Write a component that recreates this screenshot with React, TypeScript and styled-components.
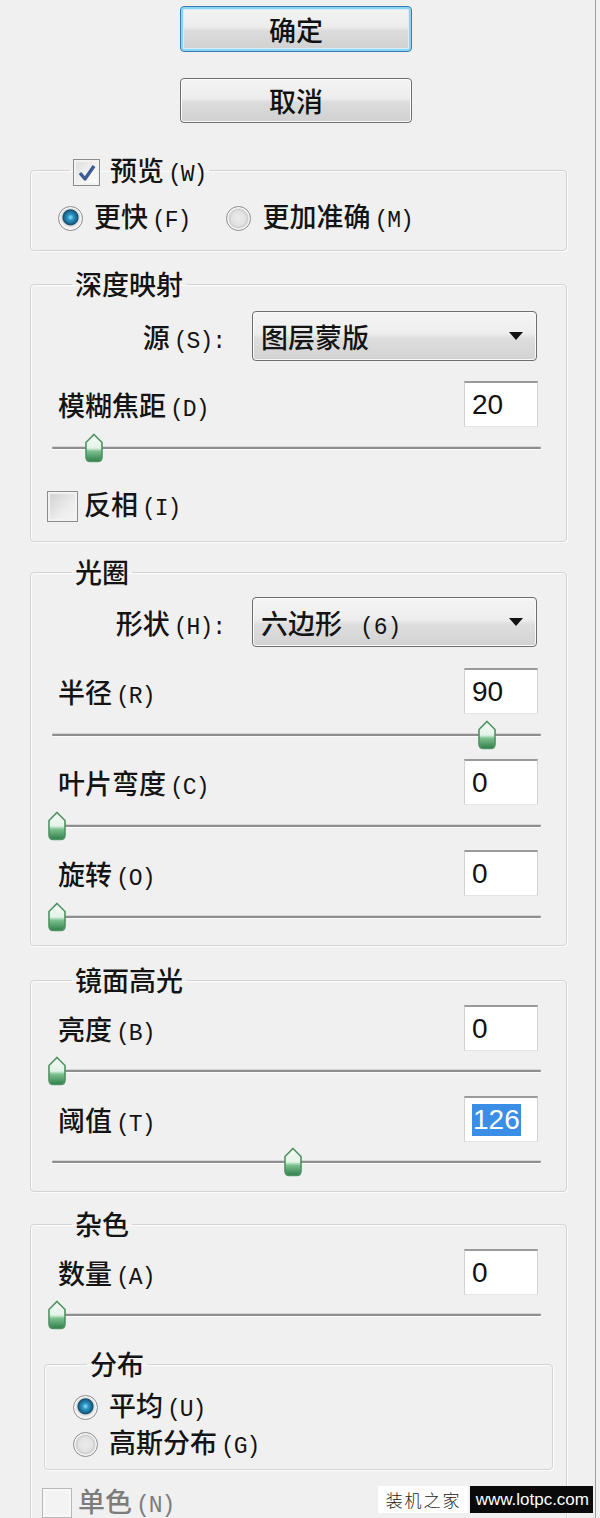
import React from 'react';
import styled, { createGlobalStyle } from 'styled-components';

const GlobalStyle = createGlobalStyle`
  html, body {
    margin: 0;
    padding: 0;
    background: #f0f0f0;
  }
  body {
    font-family: "Noto Sans CJK SC", "Noto Sans", sans-serif;
    color: #141414;
  }
`;

// slider geometry: thumb centre runs from 5px to 483px inside the row
const THUMB_START = 5;
const THUMB_RUN = 478;

const CheckMark = () => (
  <svg width="22" height="22" viewBox="0 0 22 22">
    <path d="M4 11 L9 17 L18 4" fill="none" stroke="#3d5a92" strokeWidth="3.4" strokeLinejoin="round" />
  </svg>
);

const ThumbIcon = () => (
  <svg width="20" height="30" viewBox="0 0 20 30">
    <defs>
      <linearGradient id="thumbFill" x1="0" y1="0" x2="0" y2="1">
        <stop offset="0" stopColor="#f7fcf8" />
        <stop offset="0.5" stopColor="#e3f3e7" />
        <stop offset="0.62" stopColor="#7cc08f" />
        <stop offset="1" stopColor="#2f7f49" />
      </linearGradient>
    </defs>
    <path
      d="M10 1.5 L18 9.5 L18 24 Q18 28.5 13.5 28.5 L6.5 28.5 Q2 28.5 2 24 L2 9.5 Z"
      fill="url(#thumbFill)"
      stroke="#4f9263"
      strokeWidth="1.6"
    />
  </svg>
);

const ComboArrow = () => (
  <svg width="16" height="10" viewBox="0 0 16 10">
    <path d="M1 1 L15 1 L8 9 Z" fill="#111" />
  </svg>
);

const Slider = ({ value, max, top }: { value: number; max: number; top: number }) => (
  <SliderRow $top={top}>
    <Track />
    <Thumb style={{ left: `${THUMB_START + (value / max) * THUMB_RUN - 10}px` }}>
      <ThumbIcon />
    </Thumb>
  </SliderRow>
);

interface FieldProps {
  label: string;
  mnemonic: string;
  value: string;
  top: number;
  selected?: boolean;
}

const Field = ({ label, mnemonic, value, top, selected }: FieldProps) => (
  <FieldRow $top={top}>
    <Label>
      {label}
      <Key>({mnemonic})</Key>
    </Label>
    <NumberBox>{selected ? <Selection>{value}</Selection> : value}</NumberBox>
  </FieldRow>
);

interface ComboProps {
  label: string;
  mnemonic: string;
  value: string;
  suffix?: string;
  top: number;
}

const Combo = ({ label, mnemonic, value, suffix, top }: ComboProps) => (
  <ComboRow $top={top}>
    <ComboLabel>
      {label}
      <Key>({mnemonic}):</Key>
    </ComboLabel>
    <ComboBox>
      <span>
        {value}
        {suffix && <ComboSuffix>{suffix}</ComboSuffix>}
      </span>
      <ComboArrow />
    </ComboBox>
  </ComboRow>
);

export default function App() {
  return (
    <>
      <GlobalStyle />
      <Window>
        <Dialog>
          <ButtonStack>
            <PushButton $primary>确定</PushButton>
            <PushButton>取消</PushButton>
          </ButtonStack>

          <Group $top={32}>
            <Legend $indent={12}>
              <LegendInner>
                <CheckBox $size={27}>
                  <CheckMark />
                </CheckBox>
                <span>
                  预览<Key>(W)</Key>
                </span>
              </LegendInner>
            </Legend>
            <OptionRow $top={18}>
              <Option>
                <RadioDot $on />
                <span>
                  更快<Key>(F)</Key>
                </span>
              </Option>
              <Option>
                <RadioDot />
                <span>
                  更加准确<Key>(M)</Key>
                </span>
              </Option>
            </OptionRow>
            <GroupEnd $size={17} />
          </Group>

          <Group $top={18}>
            <Legend $indent={14}>深度映射</Legend>
            <Combo label="源" mnemonic="S" value="图层蒙版" top={12} />
            <Field label="模糊焦距" mnemonic="D" value="20" top={20} />
            <Slider value={20} max={255} top={7} />
            <CheckRow $top={28} $shift={-11}>
              <CheckBox $size={31} $shade />
              <span>
                反相<Key>(I)</Key>
              </span>
            </CheckRow>
            <GroupEnd $size={19} />
          </Group>

          <Group $top={15}>
            <Legend $indent={14}>光圈</Legend>
            <Combo label="形状" mnemonic="H" value="六边形" suffix="(6)" top={10} />
            <Field label="半径" mnemonic="R" value="90" top={21} />
            <Slider value={90} max={100} top={7} />
            <Field label="叶片弯度" mnemonic="C" value="0" top={10} />
            <Slider value={0} max={100} top={7} />
            <Field label="旋转" mnemonic="O" value="0" top={10} />
            <Slider value={0} max={360} top={7} />
            <GroupEnd $size={14} />
          </Group>

          <Group $top={19}>
            <Legend $indent={14}>镜面高光</Legend>
            <Field label="亮度" mnemonic="B" value="0" top={10} />
            <Slider value={0} max={100} top={6} />
            <Field label="阈值" mnemonic="T" value="126" top={11} selected />
            <Slider value={126} max={255} top={6} />
            <GroupEnd $size={15} />
          </Group>

          <Group $top={17}>
            <Legend $indent={14}>杂色</Legend>
            <Field label="数量" mnemonic="A" value="0" top={10} />
            <Slider value={0} max={100} top={6} />
            <InnerGroup>
              <Legend $indent={14}>分布</Legend>
              <RadioLine $top={14}>
                <RadioDot $on />
                <span>
                  平均<Key>(U)</Key>
                </span>
              </RadioLine>
              <RadioLine $top={9}>
                <RadioDot />
                <span>
                  高斯分布<Key>(G)</Key>
                </span>
              </RadioLine>
              <GroupEnd $size={11} />
            </InnerGroup>
            <CheckRow $top={17} $shift={-16} $dim>
              <CheckBox $size={30} $dim />
              <span>
                单色<Key>(N)</Key>
              </span>
            </CheckRow>
            <GroupEnd $size={40} />
          </Group>
        </Dialog>

        <Watermark>
          <WatermarkName>装机之家</WatermarkName>
          <WatermarkUrl>www.lotpc.com</WatermarkUrl>
        </Watermark>
      </Window>
    </>
  );
}

const Window = styled.div`
  position: relative;
  width: 600px;
  height: 1518px;
  overflow: hidden;
  background: #f0f0f0;
`;

const Dialog = styled.div`
  width: 596px;
  height: 100%;
  box-sizing: border-box;
  padding-top: 6px;
  border-right: 1px solid #9c9c9c;
`;

const ButtonStack = styled.div`
  display: flex;
  flex-direction: column;
  align-items: center;
  gap: 26px;
  padding-right: 3px;
`;

const PushButton = styled.button<{ $primary?: boolean }>`
  width: 232px;
  height: ${(p) => (p.$primary ? 46 : 45)}px;
  box-sizing: border-box;
  padding: 0;
  border: 1px solid ${(p) => (p.$primary ? '#3a7fae' : '#6f6f6f')};
  border-radius: 4px;
  background: linear-gradient(#f4f4f4 0%, #ececec 46%, #dcdcdc 54%, #d0d0d0 100%);
  box-shadow: ${(p) =>
    p.$primary ? 'inset 0 0 0 2px #8bd3f3, inset 0 0 0 3px #d5effb' : 'inset 0 0 0 1px #fbfbfb'};
  font-family: "Noto Sans CJK SC", sans-serif;
  font-size: 27px;
  font-weight: 500;
  line-height: 1;
  color: #111;
`;

const Group = styled.fieldset<{ $top: number }>`
  margin: ${(p) => p.$top}px 28px 0 30px;
  padding: 0 28px 0 27px;
  border: 1px solid #d3d3d3;
  border-radius: 4px;
  box-shadow: inset 1px 1px 0 #fcfcfc, 1px 1px 0 #fcfcfc;
  min-width: 0;
`;

const InnerGroup = styled.fieldset`
  margin: 20px -15px 0 -14px;
  padding: 0 20px 0 28px;
  border: 1px solid #d3d3d3;
  border-radius: 4px;
  box-shadow: inset 1px 1px 0 #fcfcfc, 1px 1px 0 #fcfcfc;
  min-width: 0;
`;

const GroupEnd = styled.div<{ $size: number }>`
  height: ${(p) => p.$size}px;
`;

const Legend = styled.legend<{ $indent: number }>`
  margin-left: ${(p) => p.$indent}px;
  padding: 0 3px;
  height: 30px;
  font-size: 27px;
  font-weight: 500;
  line-height: 30px;
`;

const LegendInner = styled.span`
  display: inline-flex;
  align-items: center;
  gap: 10px;
`;

const Key = styled.span`
  margin-left: 4px;
  font-family: "Liberation Mono", "DejaVu Sans Mono", monospace;
  font-size: 23px;
  font-weight: 400;
  letter-spacing: -1px;
`;

const CheckBox = styled.span<{ $size: number; $shade?: boolean; $dim?: boolean }>`
  display: inline-flex;
  align-items: center;
  justify-content: center;
  flex: none;
  width: ${(p) => p.$size}px;
  height: ${(p) => p.$size}px;
  box-sizing: border-box;
  border: 1px solid ${(p) => (p.$dim ? '#b8b8b8' : '#8c8c8c')};
  background: ${(p) =>
    p.$dim
      ? '#f3f3f3'
      : p.$shade
      ? 'linear-gradient(135deg, #cfcfcf, #ececec 60%, #f6f6f6)'
      : 'linear-gradient(135deg, #dcdcdc, #f4f4f4 60%, #ffffff)'};
  box-shadow: inset 0 0 0 2px ${(p) => (p.$dim ? '#f7f7f7' : '#f2f2f2')};
`;

const OptionRow = styled.div<{ $top: number }>`
  display: flex;
  align-items: center;
  gap: 36px;
  height: 30px;
  margin-top: ${(p) => p.$top}px;
`;

const Option = styled.label`
  display: inline-flex;
  align-items: center;
  gap: 11px;
  font-size: 27px;
  font-weight: 500;
  line-height: 30px;
`;

const RadioLine = styled(Option)<{ $top: number }>`
  display: flex;
  height: 28px;
  margin-top: ${(p) => p.$top}px;
`;

const RadioDot = styled.span<{ $on?: boolean }>`
  width: 25px;
  height: 25px;
  flex: none;
  box-sizing: border-box;
  border-radius: 50%;
  border: 1px solid #8d8d8d;
  background: ${(p) =>
    p.$on
      ? 'radial-gradient(circle at 50% 45%, #8ce4f8 0, #2c95c4 3px, #1b6d95 6px, #164e6c 7.5px, #dadada 8.5px, #f6f6f6 11px)'
      : 'radial-gradient(circle at 50% 50%, #ececec 0, #e2e2e2 7px, #cfcfcf 9px, #f4f4f4 11px)'};
  box-shadow: inset 0 0 0 1px #f8f8f8;
`;

const CheckRow = styled.div<{ $top: number; $shift: number; $dim?: boolean }>`
  display: flex;
  align-items: center;
  gap: 6px;
  height: 32px;
  margin: ${(p) => p.$top}px 0 0 ${(p) => p.$shift}px;
  font-size: 27px;
  font-weight: 500;
  line-height: 32px;
  color: ${(p) => (p.$dim ? '#7c7c7c' : '#141414')};
`;

const ComboRow = styled.div<{ $top: number }>`
  display: grid;
  grid-template-columns: 167px 285px;
  column-gap: 27px;
  align-items: center;
  margin-top: ${(p) => p.$top}px;
`;

const ComboLabel = styled.span`
  justify-self: end;
  font-size: 27px;
  font-weight: 500;
  white-space: nowrap;
`;

const ComboBox = styled.div`
  display: flex;
  align-items: center;
  justify-content: space-between;
  height: 50px;
  box-sizing: border-box;
  padding: 0 12px 0 8px;
  border: 1px solid #6e6e6e;
  border-radius: 4px;
  background: linear-gradient(#f5f5f5 0%, #ededed 45%, #dedede 55%, #d2d2d2 100%);
  box-shadow: inset 0 0 0 1px #fafafa;
  font-size: 27px;
  font-weight: 500;
  white-space: nowrap;
`;

const ComboSuffix = styled.span`
  margin-left: 18px;
  font-family: "Liberation Mono", "DejaVu Sans Mono", monospace;
  font-size: 23px;
  font-weight: 400;
`;

const FieldRow = styled.div<{ $top: number }>`
  display: flex;
  align-items: center;
  justify-content: space-between;
  height: 46px;
  margin-top: ${(p) => p.$top}px;
`;

const Label = styled.span`
  font-size: 27px;
  font-weight: 500;
  white-space: nowrap;
`;

const NumberBox = styled.div`
  display: flex;
  align-items: center;
  width: 74px;
  height: 46px;
  box-sizing: border-box;
  padding-left: 7px;
  background: #fff;
  border-top: 2px solid #9a9a9a;
  border-left: 1px solid #d2d2d2;
  border-right: 1px solid #d2d2d2;
  border-bottom: 1px solid #e4e4e4;
  font-family: "Liberation Sans", Arial, sans-serif;
  font-size: 28px;
  color: #111;
`;

const Selection = styled.span`
  padding: 0 1px;
  background: #3a8ee6;
  color: #fff;
  line-height: 32px;
`;

const SliderRow = styled.div<{ $top: number }>`
  position: relative;
  height: 28px;
  box-sizing: border-box;
  padding-top: 13px;
  margin: ${(p) => p.$top}px -3px 0 -6px;
`;

const Track = styled.div`
  height: 2px;
  border-radius: 1px;
  background: #8e8e8e;
  box-shadow: 0 1px 0 #fdfdfd, 0 -1px 0 #d6d6d6;
`;

const Thumb = styled.span`
  position: absolute;
  top: -1px;
  width: 20px;
  height: 30px;
  line-height: 0;
`;

const Watermark = styled.div`
  position: absolute;
  right: 7px;
  bottom: 5px;
  display: flex;
  gap: 2px;
  height: 27px;
`;

const WatermarkName = styled.span`
  display: flex;
  align-items: center;
  padding: 0 6px 0 8px;
  background: #fff;
  font-size: 17px;
  font-weight: 300;
  letter-spacing: 2px;
  color: #222;
`;

const WatermarkUrl = styled.span`
  display: flex;
  align-items: center;
  padding: 0 4px 0 6px;
  background: #0a0a0a;
  font-family: "Liberation Sans", Arial, sans-serif;
  font-size: 17px;
  color: #fff;
`;
